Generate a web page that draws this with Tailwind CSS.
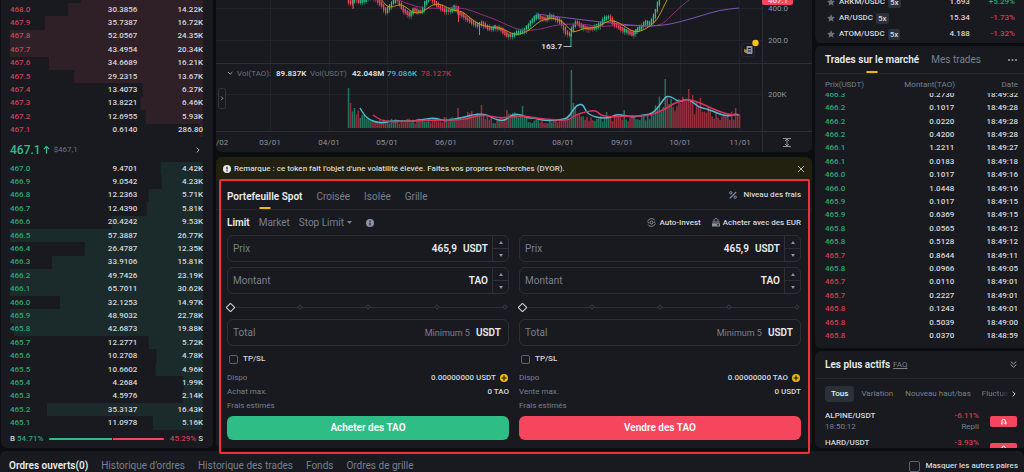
<!DOCTYPE html>
<html lang="fr">
<head>
<meta charset="utf-8">
<meta name="viewport" content="width=device-width, initial-scale=1">
<title>TAO/USDT | Trading Spot</title>
<script src="https://cdn.jsdelivr.net/npm/@tailwindcss/browser@4"></script>
</head>
<body class="min-h-screen overflow-hidden bg-[#0b0e11] font-['Roboto','Liberation_Sans',sans-serif] text-[8px] leading-3 font-medium text-[#d5d8dc]">
<div class="flex min-h-screen flex-col gap-[3px]">
<div class="grid grid-cols-[212px_minmax(0,1fr)_209px] gap-[3px] pl-px">

  <!-- Order book -->
  <section class="flex flex-col rounded-b-md bg-[#181a20] pr-[10px] pl-[9px]" aria-label="Carnet d'ordres">
    <div class="ml-[71px] h-[3px] bg-[#2f1f26]"></div>
    <table class="h-[134px] w-full table-fixed"><tbody id="asks"></tbody></table>
    <div class="flex h-[25px] items-center text-[#2ebd85]">
      <span class="text-[12px]">467.1</span>
      <svg class="ml-[2px] h-[9px] w-[7px]" viewBox="0 0 8 10" fill="none" stroke="currentColor" stroke-width="1.4"><path d="M4 9.5V1.5M1 4.5L4 1.4l3 3.1"/></svg>
      <span class="ml-1 font-normal text-[#6b7482]">$467,1</span>
      <svg class="mr-[3px] ml-auto h-[6px] w-1 text-[#b0b5bc]" viewBox="0 0 4 6" fill="none" stroke="currentColor"><path d="M.7.6L3.1 3 .7 5.4"/></svg>
    </div>
    <table class="h-[268px] w-full table-fixed"><tbody id="bids"></tbody></table>
    <div class="flex h-[18px] items-center gap-[2px] pb-px">
      <span>B</span><span class="text-[#29a877]">54.71%</span>
      <div class="mx-1 flex h-[2px] flex-1 gap-px"><span class="rounded-l bg-[#2ebd85]" style="width:54.71%"></span><span class="flex-1 rounded-r bg-[#f6465d]"></span></div>
      <span class="text-[#cf3f54]">45.29%</span><span>S</span>
    </div>
  </section>

  <!-- Chart and order form -->
  <div class="flex min-w-0 flex-col">
    <section class="overflow-hidden rounded-b-md bg-[#181a20]" aria-label="Graphique">
      <svg id="chart" class="block h-[152px] w-full" viewBox="216 0 596 152" preserveAspectRatio="xMinYMin slice" font-size="8" font-weight="400">
        <path stroke="#20232a" d="M270.5 0V131M329.5 0V131M387.5 0V131M446.5 0V131M504.5 0V131M563.5 0V131M622.5 0V131M680.5 0V131M739.5 0V131M216 8.5H762M216 40.5H762M216 94.5H762"/>
        <path d="M216 63.5H812M216 131.5H812M762.5 0V152" stroke="#2a2e36"/>
        <g id="volume"></g>
        <g id="candles"></g>
        <g id="lines" fill="none" stroke-linejoin="round"></g>
        <text x="562" y="49" fill="#d5d8dc" font-weight="700" text-anchor="end">163.7</text>
        <path d="M563.5 46.5h8" stroke="#b0b5bc"/>
        <path d="M762 0h31v3a2 2 0 0 1-2 2h-27a2 2 0 0 1-2-2z" fill="#f6465d"/>
        <text x="768" y="3" fill="#fff">467.1</text>
        <g fill="#8b929d">
          <text x="768" y="11">400.0</text><text x="768" y="43">200.0</text><text x="768" y="97">200K</text>
          <text x="216" y="145">/02</text>
          <g text-anchor="middle"><text x="270" y="145">03/01</text><text x="329" y="145">04/01</text><text x="387" y="145">05/01</text><text x="446" y="145">06/01</text><text x="504" y="145">07/01</text><text x="563" y="145">08/01</text><text x="622" y="145">09/01</text><text x="680" y="145">10/01</text><text x="740" y="145">11/01</text></g>
        </g>
        <path fill="none" stroke="#8b929d" d="M783 138.5h8M783 146.5h8M787 139v7M785 141l2-2 2 2M785 144l2 2 2-2"/>
        <rect x="741.5" y="43.5" width="13" height="13" rx="3" fill="#181a20" stroke="#262a31"/>
        <path d="M744 49l3 1v3h-1.5l-1.5-1.5z" fill="#b98a1d"/>
        <rect x="746.5" y="46" width="6" height="8" rx="1" fill="#8a94a3"/><path d="M748 48.5h3M748 51h3" stroke="#181a20"/>
        <circle cx="755.5" cy="43" r="3.2" fill="#f5bf20"/>
        <text y="76" fill="#68707c"><tspan x="237">Vol(TAO):</tspan><tspan x="310">Vol(USDT)</tspan></text>
        <g font-weight="700" fill="#d5d8dc"><text x="276" y="76">89.837K</text><text x="352" y="76">42.048M</text></g>
        <g font-weight="500"><text x="387" y="76" fill="#55b0c0">79.086K</text><text x="421" y="76" fill="#b5324f">78.127K</text></g>
        <path d="M228 72l2.2 2.2L232.400 72" fill="none" stroke="#9aa1ab"/>
        <rect x="218.5" y="88.5" width="7" height="20" rx="2" fill="#181a20" stroke="#30353e"/><path d="M221.2 96.5l1.6 1.8-1.6 1.8" fill="none" stroke="#8b929d"/>
      </svg>
    </section>

    <div class="mt-[5px] flex h-6 items-center rounded-t-md bg-[#22200f] px-[7px]" role="status">
      <svg class="h-2 w-2" viewBox="0 0 8 8"><circle cx="4" cy="4" r="4" fill="#e6e8ea"/><path d="M4 1.8v2.6M4 5.2v1.2" stroke="#22200f" stroke-width="1.2"/></svg>
      <span class="ml-[3px]">Remarque : ce token fait l’objet d’une volatilité élevée. Faites vos propres recherches (DYOR).</span>
      <button class="ml-auto" aria-label="Fermer"><svg class="h-2 w-2" viewBox="0 0 8 8" stroke="#b0b5bc" fill="none"><path d="M1 1l6 6M7 1L1 7"/></svg></button>
    </div>

    <section class="relative flex-1 rounded-b-md bg-[#181a20]" aria-label="Passer un ordre">
      <div class="pointer-events-none absolute -top-[2px] right-[2px] -bottom-[6px] left-[3px] z-10 rounded-xs border-2 border-[#ee3338]"></div>
      <nav class="flex h-[29px] items-stretch gap-[14px] border-b border-[#22262d] px-[11px] text-[10px] font-normal text-[#77808e]">
        <button class="relative pt-[3px] font-semibold text-[#eaecef]">Portefeuille Spot<span class="absolute bottom-0 left-1/2 h-[2px] w-[11px] -translate-x-1/2 bg-[#f0b90b]"></span></button>
        <button class="pt-[3px]">Croisée</button><button class="pt-[3px]">Isolée</button><button class="pt-[3px]">Grille</button>
        <a href="#" class="ml-auto flex items-center gap-[6px] text-[8px] font-medium text-[#d5d8dc]"><svg class="h-2 w-2" viewBox="0 0 8 8" fill="none" stroke="#8a94a3"><path d="M7.3.8L.8 7.3" stroke-width="1.2"/><circle cx="1.8" cy="1.8" r="1.2"/><circle cx="6.2" cy="6.2" r="1.2"/></svg>Niveau des frais</a>
      </nav>
      <div class="flex h-[25px] items-center gap-[9px] px-[11px] text-[10px] font-normal text-[#77808e]">
        <button class="font-semibold text-[#eaecef]">Limit</button><button>Market</button>
        <label class="flex items-center gap-[2px]"><select class="appearance-none bg-transparent" aria-label="Type d'ordre"><option>Stop Limit</option><option>OCO</option></select><svg class="h-[3px] w-[5px]" viewBox="0 0 5 3" fill="currentColor"><path d="M0 0h5L2.5 3z"/></svg></label>
        <svg class="ml-[5px] h-2 w-2" viewBox="0 0 8 8"><circle cx="4" cy="4" r="4" fill="#8a94a3"/><path d="M4 1.5v1.2M4 3.5v3" stroke="#181a20" stroke-width="1.2"/></svg>
        <div class="ml-auto flex gap-[11px] text-[8px] font-medium text-[#d5d8dc]">
          <a href="#" class="flex items-center gap-[3px]"><svg class="h-[9px] w-[9px]" viewBox="0 0 9 9" fill="none" stroke="#8a94a3"><path d="M.6 3.5C1.3 1.7 2.8.7 4.6.7c1.4 0 2.6.6 3.3 1.6M8.4 5.5C7.7 7.3 6.2 8.3 4.4 8.3 3 8.3 1.8 7.7 1.1 6.7M.8 4.8h1.4M6.8 4.2h1.4"/><circle cx="4.5" cy="4.5" r="1.5"/></svg>Auto-Invest</a>
          <a href="#" class="flex items-center gap-[3px]"><svg class="h-[9px] w-2" viewBox="0 0 8 9" fill="#8a94a3"><path d="M2 3.5V2.2C2 1.2 2.8.6 4 .6s2 .6 2 1.6v1.3" fill="none" stroke="#8a94a3"/><path d="M.3 3.4h7.4v1.2H.3zM0 5.2h8v3.2H0z"/><path d="M5 6.2h2v1.2H5z" fill="#181a20"/></svg>Acheter avec des EUR</a>
        </div>
      </div>
      <div id="forms" class="grid grid-cols-2 gap-[10px] px-[11px] pb-2"></div>
    </section>
  </div>

  <!-- Right column -->
  <div class="flex flex-col gap-[3px]">
    <section class="flex h-[43px] flex-col justify-end overflow-hidden rounded-bl-md bg-[#181a20] pr-[9px] pb-px pl-3" aria-label="Favoris">
      <table class="w-full table-fixed"><tbody id="pairs"></tbody></table>
    </section>

    <section class="flex flex-col rounded-l-md bg-[#181a20] pb-[5px]" aria-label="Trades">
      <nav class="flex h-7 items-stretch gap-3 border-b border-[#22262d] pr-[7px] pl-[10px] text-[10px] font-normal text-[#77808e]">
        <button class="relative font-semibold text-[#eaecef]">Trades sur le marché<span class="absolute bottom-0 left-1/2 h-[2px] w-[11px] -translate-x-1/2 bg-[#f0b90b]"></span></button>
        <button>Mes trades</button>
        <button class="ml-auto" aria-label="Plus"><svg class="h-[2px] w-[9px]" viewBox="0 0 9 2" fill="#9aa1ab"><circle cx="1" cy="1" r="1"/><circle cx="4.5" cy="1" r="1"/><circle cx="8" cy="1" r="1"/></svg></button>
      </nav>
      <div class="grid h-[19px] grid-cols-[67px_1fr_1fr] items-center pt-[2px] pr-[6px] pl-[10px] font-normal text-[#77808e]"><span>Prix(USDT)</span><span class="text-right">Montant(TAO)</span><span class="text-right">Date</span></div>
      <div class="flex h-[250px] flex-col justify-end overflow-hidden pr-[6px] pl-[10px]">
        <table class="h-[255px] w-full shrink-0 table-fixed"><tbody id="trades"></tbody></table>
      </div>
    </section>

    <section class="h-[97px] overflow-hidden rounded-l-md bg-[#181a20]" aria-label="Les plus actifs">
      <div class="flex h-7 items-center border-b border-[#22262d] pr-[7px] pl-[10px]">
        <h2 class="text-[10px] font-semibold text-[#eaecef]">Les plus actifs</h2>
        <a href="#" class="ml-[3px] font-normal text-[#77808e] underline">FAQ</a>
        <svg class="ml-auto h-[7px] w-[7px]" viewBox="0 0 7 7" fill="none" stroke="#9aa1ab"><path d="M.7.5l2.8 2.5L6.3.5M.7 3.7l2.8 2.5 2.8-2.5"/></svg>
      </div>
      <div class="flex items-center gap-[7px] pt-[7px] pr-2 pl-[10px] font-normal text-[#77808e]">
        <button class="h-4 rounded bg-[#2b3139] px-[6px] font-medium text-[#eaecef]">Tous</button>
        <button>Variation</button>
        <button class="ml-[5px] whitespace-nowrap">Nouveau haut/bas</button>
        <button class="ml-1 min-w-0 flex-1 overflow-hidden text-left [mask-image:linear-gradient(to_right,#000_60%,transparent)]">Fluctuations</button>
        <svg class="-ml-1 h-[6px] w-1" viewBox="0 0 4 6" fill="none" stroke="#d5d8dc"><path d="M.7.6L3.1 3 .7 5.4"/></svg>
      </div>
      <table class="mt-2 w-full table-fixed"><tbody id="movers"></tbody></table>
    </section>
  </div>
</div>

<!-- Orders bar -->
<section class="flex h-[30px] items-center gap-[13px] rounded-t-md bg-[#181a20] pr-[6px] pl-[9px] text-[10px] font-normal text-[#77808e]" aria-label="Ordres">
  <button class="font-semibold text-[#eaecef]">Ordres ouverts(0)</button><button>Historique d’ordres</button><button>Historique des trades</button><button>Fonds</button><button>Ordres de grille</button>
  <label class="ml-auto flex items-center gap-[5px] text-[8px] font-medium text-[#d5d8dc]"><input type="checkbox" class="h-[11px] w-[11px] appearance-none rounded-xs border border-[#5a626e]">Masquer les autres paires</label>
</section>
</div>

<script>
const $ = id => document.getElementById(id);

// Order book: price, amount, total, depth (share of the row width)
const asks = [["468.0","30.3856","14.22K",70],["467.9","35.7387","16.72K",82],["467.8","52.0567","24.35K",100],["467.7","43.4954","20.34K",100],["467.6","34.6689","16.21K",80],["467.5","29.2315","13.67K",67],["467.4","13.4073","6.27K",31],["467.3","13.8221","6.46K",32],["467.2","12.6955","5.93K",29.5],["467.1","0.6140","286.80",1.5]];
const bids = [["467.0","9.4701","4.42K",22],["466.9","9.0542","4.23K",21],["466.8","12.2363","5.71K",28],["466.7","12.4390","5.81K",29],["466.6","20.4242","9.53K",47],["466.5","57.3887","26.77K",100],["466.4","26.4787","12.35K",61],["466.3","33.9106","15.81K",78],["466.2","49.7426","23.19K",100],["466.1","65.7011","30.62K",100],["466.0","32.1253","14.97K",74],["465.9","48.9032","22.78K",100],["465.8","42.6873","19.88K",98],["465.7","12.2771","5.72K",28],["465.6","10.2708","4.78K",24],["465.5","10.6602","4.96K",24.5],["465.4","4.2684","1.99K",10],["465.3","4.5976","2.14K",10.5],["465.2","35.3137","16.43K",81],["465.1","11.0978","5.16K",25.5]];
const bookRow = (r, tone, bar) => `<tr style="background:linear-gradient(to left,${bar} ${r[3]}%,transparent ${r[3]}%)"><td class="w-[30%] ${tone}">${r[0]}</td><td class="w-[36%] text-right">${r[1]}</td><td class="text-right">${r[2]}</td></tr>`;
$("asks").innerHTML = asks.map(r => bookRow(r, "text-[#cf3f54]", "#2f1f26")).join("");
$("bids").innerHTML = bids.map(r => bookRow(r, "text-[#29a877]", "#1b2b2b")).join("");

// Favourite pairs
$("pairs").innerHTML = [["ARKM/USDC","1.693","+5.29%","text-[#29a877]"],["AR/USDC","15.34","-1.73%","text-[#cf3f54]"],["ATOM/USDC","4.188","-1.32%","text-[#cf3f54]"]].map(p => `<tr class="h-4"><td class="w-[50%]"><span class="flex items-center"><svg class="mr-1 h-2 w-2" viewBox="0 0 10 10" fill="#68707c"><path d="M5 0l1.5 3.3 3.5.4-2.6 2.4.7 3.6L5 7.9 1.9 9.7l.7-3.6L0 3.7l3.5-.4z"/></svg><span>${p[0]}</span><span class="ml-[3px] rounded-xs bg-[#2b3139] px-[2px] leading-[11px]">5x</span></span></td><td class="w-[26%] text-right">${p[1]}</td><td class="text-right ${p[3]}">${p[2]}</td></tr>`).join("");

// Latest market trades
const trades = [["466.3","0.2730","32",1],["466.2","0.1017","28",1],["466.2","0.0220","28",1],["466.2","0.4200","28",1],["466.1","1.2211","27",1],["466.1","0.0183","18",1],["466.0","0.1017","16",1],["466.0","1.0448","16",1],["465.9","0.1017","15",1],["465.9","0.6369","15",1],["465.8","0.0565","12",1],["465.8","0.5128","12",1],["465.7","0.8644","11",0],["465.8","0.0966","05",1],["465.7","0.0110","01",0],["465.7","0.2227","01",0],["465.8","0.1243","01",0],["465.8","0.5039","00",0],["465.8","0.0370","59",0]];
$("trades").innerHTML = trades.map(t => `<tr><td class="w-[30%] ${t[3] ? "text-[#29a877]" : "text-[#cf3f54]"}">${t[0]}</td><td class="w-[37%] text-right">${t[1]}</td><td class="text-right">18:${t[2] === "59" ? "48" : "49"}:${t[2]}</td></tr>`).join("");

// Most active pairs
$("movers").innerHTML = [["ALPINE/USDT","18:50:12","-6.11%","Repli"],["HARD/USDT","18:50:10","-3.93%","Repli"]].map(m => `<tr class="h-[27px] align-top leading-[11px]"><td class="w-[50%] pl-[10px]"><span>${m[0]}</span><br><span class="font-normal text-[#77808e]">${m[1]}</span></td><td class="text-right"><span class="text-[#cf3f54]">${m[2]}</span><br><span class="font-normal text-[#77808e]">${m[3]}</span></td><td class="w-[45px] pt-[6px] pr-[7px] pl-[11px]"><span class="flex h-[11px] items-center justify-center rounded-xs bg-[#f6465d]"><svg class="h-[7px] w-[7px]" viewBox="0 0 7 7" fill="none" stroke="#fff"><path d="M2 6.5V3a1.7 1.7 0 0 1 3.4 0v2.5M3.8 4.5l1.6 1.6L7 4.500M1 5.5h1"/></svg></span></td></tr>`).join("");

// Order forms
const stepper = `<span class="flex w-4 flex-col border-l border-[#2b3038] text-[#8a94a3]"><button class="flex flex-1 items-center justify-center border-b border-[#2b3038]" aria-label="Augmenter"><svg class="h-[3px] w-1" viewBox="0 0 4 3" fill="currentColor"><path d="M0 3h4L2 0z"/></svg></button><button class="flex flex-1 items-center justify-center" aria-label="Diminuer"><svg class="h-[3px] w-1" viewBox="0 0 4 3" fill="currentColor"><path d="M0 0h4L2 3z"/></svg></button></span>`;
const field = (id, label, value, hint, unit, steps) => `<div class="mb-[5px] flex h-[27px] rounded-md border border-[#2b3038] text-[10px]"><label for="${id}" class="flex items-center pl-[5px] font-normal text-[#77808e]">${label}</label><input id="${id}" value="${value}" placeholder="${hint}" class="w-0 flex-1 bg-transparent text-right font-semibold text-[#eaecef] outline-none placeholder:text-[9px] placeholder:font-normal placeholder:text-[#77808e]"><span class="flex items-center pl-[6px] font-semibold text-[#eaecef] ${steps ? "pr-1" : "pr-[7px]"}">${unit}</span>${steps ? stepper : ""}</div>`;
const tick = `<span class="h-1 w-1 rotate-45 border border-[#343a43] bg-[#181a20]"></span>`;
const form = (k, verb, max, coin, maxCoin, tone) => `<form onsubmit="return false">
${field(k + "-price", "Prix", "465,9", "", "USDT", true)}${field(k + "-amount", "Montant", "", "", "TAO", true)}
<div class="relative mb-1 flex h-4 items-center"><div class="absolute inset-x-[2px] flex items-center justify-between bg-[linear-gradient(#2b3038,#2b3038)] bg-[length:100%_1px] bg-center bg-no-repeat">${tick.repeat(5)}</div><input type="range" value="0" aria-label="Pourcentage" class="relative w-full appearance-none bg-transparent [&::-webkit-slider-thumb]:h-[7px] [&::-webkit-slider-thumb]:w-[7px] [&::-webkit-slider-thumb]:rotate-45 [&::-webkit-slider-thumb]:appearance-none [&::-webkit-slider-thumb]:rounded-[1px] [&::-webkit-slider-thumb]:border [&::-webkit-slider-thumb]:border-[#d5d8dc] [&::-webkit-slider-thumb]:bg-[#181a20]"></div>
${field(k + "-total", "Total", "", "Minimum 5", "USDT", false)}
<label class="mt-[7px] flex items-center gap-[5px] pl-[2px]"><input type="checkbox" class="h-[9px] w-[9px] appearance-none rounded-xs border border-[#5a626e]">TP/SL</label>
<dl class="mt-[7px] grid grid-cols-[auto_1fr] gap-y-[2px] font-normal text-[#77808e]"><dt>Dispo</dt><dd class="flex items-center justify-end gap-[4px] pr-px font-medium text-[#d5d8dc]">0.00000000 ${coin}<svg class="h-2 w-2" viewBox="0 0 8 8"><circle cx="4" cy="4" r="4" fill="#f0b90b"/><path d="M4 1.5v5M1.5 4h5" stroke="#181a20" stroke-width="1.2"/></svg></dd><dt>${max}</dt><dd class="text-right font-medium text-[#d5d8dc]">0 ${maxCoin}</dd><dt>Frais estimés</dt><dd></dd></dl>
<button class="mt-1 h-6 w-full rounded-md text-[10px] font-semibold text-white ${tone}">${verb} des TAO</button></form>`;
$("forms").innerHTML = form("buy", "Acheter", "Achat max.", "USDT", "TAO", "bg-[#2ebd85]") + form("sell", "Vendre", "Vente max.", "TAO", "USDT", "bg-[#f6465d]");

// Chart series, as x,y pairs
const at = (pts, x) => { for (let i = 0; i < pts.length - 2; i += 2) if (x <= pts[i + 2]) return pts[i + 1] + (pts[i + 3] - pts[i + 1]) * (x - pts[i]) / (pts[i + 2] - pts[i]); return pts[pts.length - 1]; };
let seed = 7; const rnd = () => (seed = (seed * 16807) % 2147483647) / 2147483647;
const price = [348,0,353,3,357,-3,361,2,365,1,372,-5,378,-1,385,7,387,13,390,8,394,2,399,-1,402,6,405,10,408,12,411,15,415,10,420,12,424,11,427,2,432,-3,437,3,441,7,446,10,452,11,457,6,459,13,463,14,468,19,473,22,478,25,480,25,483,23,488,27,492,29,497,27,502,29,506,33,510,36,514,35,518,33,523,32,528,28,533,21,538,16,543,18,548,19,552,16,558,19,563,23,567,32,571,35,573,30,576,24,578,22,582,26,588,28,592,29,597,27,602,24,606,18,611,17,616,25,620,27,625,30,630,32,634,34,638,30,643,27,647,22,652,24,656,15,659,5,662,-6,760,-20];
const vol = [348,24,352,22,358,18,366,11,372,7,400,8,420,8,440,9,460,12,475,15,485,13,495,6,505,13,512,15,525,9,545,8,565,8,571,16,580,13,590,11,600,10,615,12,630,11,650,14,658,26,668,29,680,28,690,28,700,21,712,17,722,13,732,15,739,15];
const spikes = {0:40,1:25,3:20,56:20,61:16,68:23,69:14,73:11,81:18,114:58,115:25,116:20,89:22,84:15,141:18,132:16,162:49,163:30,174:39,176:33,180:30,198:20,199:14};
let bars = "", candles = "";
for (let i = 0; i < 201; i++) {
  const x = 348.5 + i * 1.955, h = spikes[i] || at(vol, x) * (0.55 + rnd() * 0.65);
  const y0 = at(price, x), y1 = at(price, x + 2), up = Math.abs(y1 - y0) < 1 ? rnd() > 0.5 : y1 < y0;
  const green = i === 0 || i === 114 || i === 162 || (up && i < 166);
  bars += `<rect x="${x - .7}" y="${128 - h}" width="1.5" height="${h}" fill="${green ? "#22745a" : "#96303f"}"/>`;
  const top = Math.min(y0, y1) - 1 - rnd(), bot = Math.max(y0, y1) + 1 + rnd(), c = up ? "#2ebd85" : "#f6465d";
  candles += `<rect x="${x - .65}" y="${top}" width="1.3" height="${bot - top}" fill="${c}"/><rect x="${x - .25}" y="${top - rnd() * 2}" width=".5" height="${bot - top + 3}" fill="${c}"/>`;
}
candles += `<rect x="570.5" y="34" width="1" height="12" fill="#2ebd85"/><rect x="479" y="24" width="1" height="11" fill="#2ebd85"/><rect x="458" y="6" width="1" height="16" fill="#f6465d"/><rect x="352.5" y="0" width="1.2" height="9" fill="#f6465d"/>`;
$("volume").innerHTML = bars; $("candles").innerHTML = candles;
const smooth = p => { let d = `M${p[0]} ${p[1]}`; for (let i = 2; i < p.length - 2; i += 2) d += `Q${p[i]} ${p[i + 1]} ${(p[i] + p[i + 2]) / 2} ${(p[i + 1] + p[i + 3]) / 2}`; return d + `L${p[p.length - 2]} ${p[p.length - 1]}`; };
$("lines").innerHTML = [
 ["#8f2f78",1,[394,-2,405,3,425,9,447,7.5,465,8,480,14,497,20,515,29,530,31,545,28,560,24,585,24,600,27,620,25,640,26,658,26,665,22,678,9,690,-1]],
 ["#7a55b5",1,[537,14,560,17,600,22,640,26,660,26,680,22,700,16,720,10,739,8]],
 ["#c0980f",1,[380,-2,384,3,388,7,393,7,400,4,406,7,413,13,422,13,430,6,438,3,448,8,455,11,462,11,470,18,480,25,490,27,500,28,507,31,515,35,525,33,533,27,541,20,552,18,560,20,566,25,572,32,578,31,584,28,595,28,603,24,610,20,618,22,627,28,634,32,642,31,650,26,657,20,663,8,668,-2]],
 ["#55b8d0",1.5,[360,108,364,115,370,120,376,122,383,123,390,121,400,121,415,121,425,119,435,118,445,121,455,119,465,117,472,115,480,114,488,115,494,119,503,121,508,118,512,115,520,114,527,118,535,118,545,121,560,120,568,118,573,110,577,105,583,104,586,112,592,116,600,118,610,118,617,114,625,116,635,117,643,115,652,114,660,105,665,97,670,96,676,100,680,102,686,99,692,101,698,107,707,109,715,112,722,115,730,116,735,114,739,115]],
 ["#d8345c",1.5,[373,115,380,120,390,122,410,121,440,120,460,120,470,118,480,115,490,116,500,118,512,117,525,116,535,118,545,119,568,121,575,115,585,112,596,110,600,115,610,117,625,116,640,116,652,115,665,109,675,103,685,99,695,101,705,105,715,110,730,115,739,115]]
].map(l => `<path d="${smooth(l[2])}" stroke="${l[0]}" stroke-width="${l[1]}"/>`).join("");
</script>
</body>
</html>
